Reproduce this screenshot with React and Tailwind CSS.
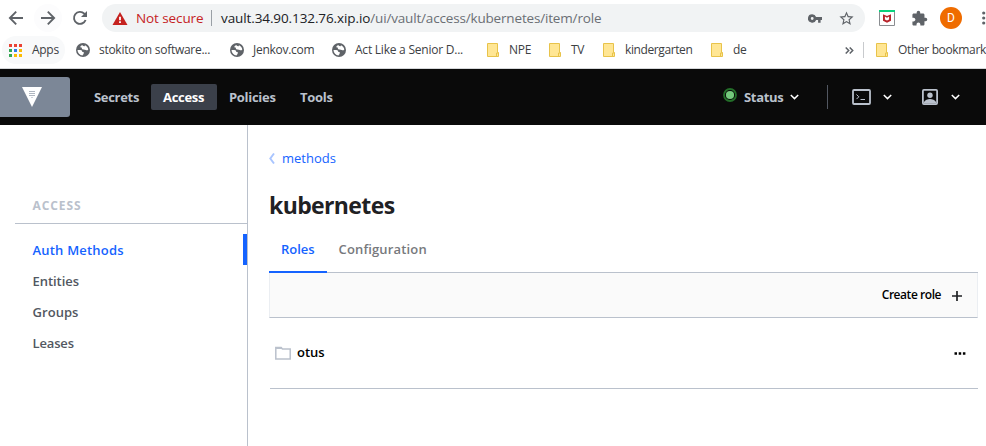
import React from "react";

const Globe = () => (
  <svg className="block h-[14px] w-[14px] shrink-0" viewBox="0 0 14 14">
    <circle cx="7" cy="7" r="7" fill="#5f6368" />
    <path d="M1.500 7h2.800c1.300 0 2 .8 2 1.900h1.400v1.500c-.2 1-1.100 1.300-1.100 2A5.500 5.500 0 0 1 1.500 7zM6.400 2.100c0 .9 1 1.200 2.200 1.100l.4-1c1.800.8 3 2.300 3.300 4.200-.6.9-1.500 1-2.500.6-.7-.3-1.300-.5-2.100-.5-1 0-1.900-.5-1.900-1.500 0-.8-.9-.9-1.800-.8.5-1 1.400-1.700 2.400-2.100z" fill="#fff" />
  </svg>
);

const Folder = () => (
  <svg className="block h-[14px] w-[12px] shrink-0" viewBox="0 0 12 14">
    <path d="M.5.5h10v9h1v4H.5z" fill="#ffe694" stroke="#e8c34a" />
    <path d="M9.500 13.500v-3.500h2" fill="none" stroke="#e8c34a" />
  </svg>
);

const Chevron = () => (
  <svg className="block h-[6px] w-[9px] shrink-0" viewBox="0 0 9 6">
    <path d="m.8 1 3.700 3.600L8.200 1" fill="none" stroke="#fff" strokeWidth="1.500" />
  </svg>
);

function Toolbar() {
  return (
    <div className="flex h-9 w-[986px] items-center">
      <svg className="ml-[8px] block h-4 w-4 shrink-0" viewBox="0 0 16 16">
        <path d="M15 8H2.200M8.200 1.700 1.900 8l6.300 6.300" fill="none" stroke="#5f6368" strokeWidth="1.900" />
      </svg>
      <div className="ml-[10px] flex h-7 w-7 shrink-0 items-center justify-center rounded-full bg-[#fcfcfd]">
        <svg className="block h-4 w-4 shrink-0" viewBox="0 0 16 16">
          <path d="M1 8h12.800M7.800 1.700 14.100 8l-6.300 6.300" fill="none" stroke="#5f6368" strokeWidth="1.900" />
        </svg>
      </div>
      <svg className="ml-[10px] block h-4 w-4 shrink-0" viewBox="0 0 16 16">
        <path d="M13.600 10A6 6 0 1 1 12.300 3.700L14 5.500" fill="none" stroke="#5f6368" strokeWidth="1.900" />
        <path d="M15 1v6H9z" fill="#5f6368" />
      </svg>
      <div className="ml-[14px] flex h-7 w-[763px] shrink-0 items-center rounded-full bg-[#f1f3f4] whitespace-nowrap">
        <svg className="ml-[10px] block h-[13px] w-[16px] shrink-0" viewBox="0 0 16 13">
          <path d="M8 0 15.500 13H.5z" fill="#c5221f" />
          <path d="M7.100 4.800h1.800v3.400H7.100zM7.100 9.300h1.800v1.700H7.100z" fill="#fff" />
        </svg>
        <span className="ml-[8px] w-[75px] shrink-0 text-[13.500px] tracking-[-0.1px] text-[#c5221f]">Not secure</span>
        <span className="h-4 w-px shrink-0 bg-[#9aa0a6]" />
        <span className="ml-[9px] w-[587px] shrink-0 text-[13.500px] tracking-[-0.170px] text-[#202124]">
          <span className="tracking-[-0.100px]">vault.34.90.132.76.xip.io</span>
          <span className="text-[#6b6f74]">/ui/vault/access/kubernetes/item/role</span>
        </span>
        <svg className="block h-[9px] w-[14px] shrink-0" viewBox="0 0 14 9">
          <path fillRule="evenodd" d="M4.200.3a4.200 4.200 0 1 0 3.900 5.600h2v2.800h2.500V5.900H14V3.100H8.100A4.200 4.200 0 0 0 4.200.3zm0 2.800a1.400 1.400 0 1 1 0 2.800 1.400 1.400 0 0 1 0-2.800z" fill="#5f6368" />
        </svg>
        <svg className="ml-[16px] block h-[17px] w-[17px] shrink-0" viewBox="0 0 24 24">
          <path fill="#5f6368" d="M22 9.240l-7.190-.62L12 2 9.190 8.630 2 9.240l5.460 4.730L5.820 21 12 17.270 18.180 21l-1.630-7.030L22 9.240zM12 15.400l-3.760 2.270 1-4.280-3.320-2.880 4.380-.38L12 6.100l1.710 4.040 4.380.38-3.320 2.880 1 4.280L12 15.400z" />
        </svg>
      </div>
      <svg className="ml-[14px] block h-4 w-4 shrink-0" viewBox="0 0 16 16">
        <path d="M.5.5h15v15H.5z" fill="#fff" stroke="#8a8d91" />
        <path d="M0 0h16v2H0z" fill="#0bd27d" />
        <path d="M4 4.200 8 6l4-1.800v6.600L8 12.800l-4-2z" fill="#b8242b" />
        <path d="M5.900 6.600v3l2.100 1 2.100-1v-3L8 7.700z" fill="#fff" />
      </svg>
      <svg className="ml-[16px] block h-[17px] w-[17px] shrink-0" viewBox="0 0 24 24">
        <path fill="#5f6368" d="M20.500 11H19V7c0-1.100-.9-2-2-2h-4V3.500a2.500 2.500 0 0 0-5 0V5H4c-1.100 0-1.990.9-1.990 2v3.800H3.500c1.490 0 2.700 1.210 2.700 2.700s-1.210 2.700-2.700 2.700H2V20c0 1.100.9 2 2 2h3.800v-1.500c0-1.490 1.210-2.700 2.700-2.700s2.700 1.210 2.700 2.700V22H17c1.100 0 2-.9 2-2v-4h1.500a2.500 2.500 0 0 0 0-5z" />
      </svg>
      <span className="ml-[12px] flex h-[22px] w-[22px] shrink-0 items-center justify-center rounded-full bg-[#ef6c00] font-[Roboto] text-[12px] text-white">D</span>
      <svg className="ml-[20px] block h-[14px] w-[4px] shrink-0" viewBox="0 0 4 14">
        <circle cx="1.700" cy="2" r="1.600" fill="#5f6368" />
        <circle cx="1.700" cy="7" r="1.600" fill="#5f6368" />
        <circle cx="1.700" cy="12" r="1.600" fill="#5f6368" />
      </svg>
    </div>
  );
}

function Bookmarks() {
  const colors = ["#ea4335", "#ea4335", "#ea4335", "#34a853", "#2f7de9", "#fbbc04", "#34a853", "#fbbc04", "#fbbc04"];
  return (
    <div className="flex h-[33px] w-[986px] items-start border-b border-[#d5d7da] text-[12px] tracking-[-0.280px] whitespace-nowrap text-[#3c4043]">
      <div className="flex h-7 w-[986px] shrink-0 items-center">
        <div className="ml-[2px] flex h-7 w-[63px] shrink-0 items-center rounded-full bg-[#f8f9fa]">
          <div className="ml-[7px] grid w-[13px] shrink-0 grid-cols-3 gap-[2px]">
            {colors.map((c, i) => (
              <span key={i} className="h-[3px] w-[3px]" style={{ background: c }} />
            ))}
          </div>
          <span className="ml-[10px]">Apps</span>
        </div>
        <span className="w-[11px] shrink-0" />
        <Globe />
        <span className="ml-[9px] w-[131px] shrink-0">stokito on software...</span>
        <Globe />
        <span className="ml-[9px] w-[79px] shrink-0">Jenkov.com</span>
        <Globe />
        <span className="ml-[9px] w-[132px] shrink-0 tracking-[-0.230px]">Act Like a Senior D...</span>
        <Folder />
        <span className="ml-[10px] w-[40px] shrink-0">NPE</span>
        <Folder />
        <span className="ml-[10px] w-[32px] shrink-0">TV</span>
        <Folder />
        <span className="ml-[10px] w-[86px] shrink-0 tracking-[-0.400px]">kindergarten</span>
        <Folder />
        <span className="ml-[10px] w-[112px] shrink-0">de</span>
        <svg className="block h-[7px] w-[9px] shrink-0" viewBox="0 0 9 7">
          <path d="m.7.5 3 3-3 3M4.700.5l3 3-3 3" fill="none" stroke="#5f6368" strokeWidth="1.500" />
        </svg>
        <span className="ml-[9px] h-4 w-px shrink-0 bg-[#c8cacd]" />
        <span className="w-[12px] shrink-0" />
        <Folder />
        <span className="ml-[10px] shrink-0 tracking-[-0.350px]">Other bookmark</span>
      </div>
    </div>
  );
}

function Header() {
  return (
    <header className="flex h-14 w-[986px] items-center bg-[#0a0a0a] text-[13px] font-bold tracking-[-0.300px] whitespace-nowrap text-[#bac1cc]">
      <div className="flex h-10 w-[70px] shrink-0 items-center justify-center rounded-r-[3px] bg-[#7c8797]">
        <svg className="mr-[6px] block h-[20px] w-[20px]" viewBox="0 0 20 20">
          <path d="M0 0h20L10 20z" fill="#fff" />
          <path d="M7.300 4.500h5.400M7.300 6.500h5.400M7.300 8.500h5.400" stroke="#8e98a6" strokeWidth="1.100" strokeDasharray="1.400 .6" />
          <path d="M9.300 10h1.400v1H9.300z" fill="#bac1cc" />
        </svg>
      </div>
      <span className="ml-[24px] w-[57px] shrink-0 pt-px">Secrets</span>
      <span className="flex h-[26px] w-[66px] shrink-0 items-center rounded-[2px] bg-[#3b404a] pt-px pl-[12px] text-white">Access</span>
      <span className="ml-[12px] w-[71px] shrink-0 pt-px">Policies</span>
      <span className="w-[423px] shrink-0 pt-px">Tools</span>
      <svg className="mb-[4px] block h-[14px] w-[14px] shrink-0" viewBox="0 0 14 14">
        <circle cx="7" cy="7" r="6" fill="#0a0a0a" stroke="#236e29" strokeWidth="1.800" />
        <circle cx="7" cy="7" r="4.100" fill="#74c97c" />
      </svg>
      <span className="ml-[7px] w-[46px] shrink-0 pt-px">Status</span>
      <Chevron />
      <span className="ml-[28px] h-6 w-px shrink-0 bg-[#525761]" />
      <svg className="ml-[24px] block h-[16px] w-[19px] shrink-0" viewBox="0 0 19 16">
        <rect x="1" y="1" width="17" height="14" rx="1" fill="none" stroke="#bac1cc" strokeWidth="1.800" />
        <path d="m4.500 5.500 2.300 2.300-2.300 2.300M8.500 10.500H13" fill="none" stroke="#bac1cc" />
      </svg>
      <span className="w-[12px] shrink-0" />
      <Chevron />
      <svg className="ml-[30px] block h-[16px] w-[16px] shrink-0" viewBox="0 0 16 16">
        <rect x=".9" y=".9" width="14.200" height="14.200" rx="1" fill="none" stroke="#bac1cc" strokeWidth="1.800" />
        <circle cx="8" cy="6.200" r="2.700" fill="#bac1cc" />
        <path d="M2 14.500v-1.500c.8-2 3.800-3 6-3s5.200 1 6 3v1.500z" fill="#bac1cc" />
      </svg>
      <span className="w-[13px] shrink-0" />
      <Chevron />
    </header>
  );
}

function Sidebar() {
  return (
    <aside className="flex h-[321px] w-[248px] shrink-0 flex-col border-r border-[#bac1cc] text-[13px] font-semibold text-[#525761]">
      <div className="ml-[15px] flex h-[99px] items-end border-b border-[#bac1cc] pb-[8px] pl-[17.500px] text-[12px] font-bold tracking-[0.900px] text-[#bac1cc]">ACCESS</div>
      <div className="mt-[10px] flex h-[31px] items-center border-r-4 border-[#1563ff] pt-[2px] pl-[32.500px] tracking-[0.200px] text-[#1563ff]">Auth Methods</div>
      <div className="flex h-[31px] items-center pt-[2px] pl-[32.500px] tracking-[-0.050px]">Entities</div>
      <div className="flex h-[31px] items-center pt-[2px] pl-[32.500px] tracking-[0.050px]">Groups</div>
      <div className="flex h-[31px] items-center pt-[2px] pl-[32.500px] tracking-[-0.150px]">Leases</div>
    </aside>
  );
}

function Main() {
  return (
    <main className="ml-[21px] flex w-[709px] shrink-0 flex-col text-[13px]">
      <div className="mt-[23px] flex h-[21px] items-center">
        <svg className="block h-[11px] w-[6px]" viewBox="0 0 6 11">
          <path d="M5 .5 1.300 5.500 5 10.500" fill="none" stroke="#a9c5ff" strokeWidth="1.900" />
        </svg>
        <span className="ml-[7px] text-[#1563ff]">methods</span>
      </div>
      <h1 className="mt-[18px] flex h-[36px] items-center text-[23px] font-bold tracking-[-0.620px] text-[#1f2124]">kubernetes</h1>
      <div className="mt-[2px] flex h-[48px] shrink-0 border-b border-[#bac1cc] font-semibold">
        <div className="flex h-[48px] w-[58px] shrink-0 items-center border-b-2 border-[#1563ff] pt-[4px] pl-[12px] text-[#1563ff]">Roles</div>
        <div className="flex h-[46px] items-center pt-[4px] pl-[11.500px] tracking-[0.150px] text-[#77797d]">Configuration</div>
      </div>
      <div className="flex h-[45px] shrink-0 items-center justify-end border-x border-b border-x-[#ebeef2] border-b-[#bac1cc] bg-[#fafafa] text-[12px] font-semibold text-black">
        <span className="tracking-[-0.450px]">Create role</span>
        <svg className="mt-px mr-[15px] ml-[11px] block h-[10px] w-[10px]" viewBox="0 0 10 10">
          <path d="M0 5h10M5 0v10" stroke="#1f2124" strokeWidth="1.700" />
        </svg>
      </div>
      <div className="ml-px flex h-[71px] shrink-0 items-center border-b border-[#bac1cc] pl-[5px] font-semibold text-black">
        <svg className="block h-[14px] w-[16px]" viewBox="0 0 16 14">
          <path d="M.8 12.400V1.600h5.400L7.400 3h7.800v9.900H.8z" fill="none" stroke="#bac1cc" strokeWidth="1.500" />
          <path d="M1 1h5.500l1 2H1z" fill="#bac1cc" />
        </svg>
        <span className="ml-[6px] flex-1">otus</span>
        <svg className="mr-[12px] block h-[3px] w-[12px]" viewBox="0 0 12 3">
          <path d="M.5.3h2.500v2.400H.5zM4.700.3h2.500v2.400H4.700zM8.900.3h2.500v2.400H8.900z" fill="#000" />
        </svg>
      </div>
    </main>
  );
}

export default function App() {
  return (
    <div className="h-[446px] w-[986px] overflow-hidden bg-white font-['Open_Sans','Noto_Sans',sans-serif]">
      <Toolbar />
      <Bookmarks />
      <Header />
      <div className="flex">
        <Sidebar />
        <Main />
      </div>
    </div>
  );
}
